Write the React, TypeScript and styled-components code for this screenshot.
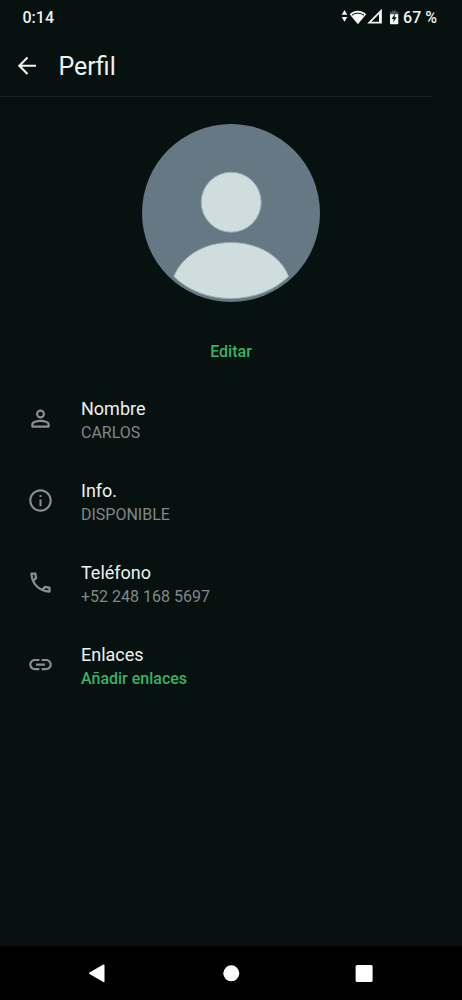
import React from 'react';
import styled, { createGlobalStyle } from 'styled-components';

const GlobalStyle = createGlobalStyle`
  * { box-sizing: border-box; }
  body { margin: 0; background: #07110f; }
`;

const Screen = styled.div`
  display: flex;
  flex-direction: column;
  width: 462px;
  height: 1000px;
  background: #07110f;
  color: #eef2f1;
  font-family: Roboto, 'Liberation Sans', sans-serif;
  overflow: hidden;
`;

const StatusBar = styled.div`
  display: flex;
  align-items: center;
  justify-content: space-between;
  height: 35px;
  padding: 0 25px 0 22.5px;
  font-size: 16px;
  font-weight: 500;
  line-height: 20px;
  white-space: nowrap;
`;

const StatusGroup = styled.div`
  display: flex;
  align-items: center;
`;

const StatusIcons = styled.svg`
  display: block;
  margin-right: 3px;
`;

const Header = styled.header`
  display: flex;
  align-items: center;
  width: 433px;
  height: 62px;
  padding-left: 13px;
  border-bottom: 1px solid #182220;
`;

const BackButton = styled.button`
  display: flex;
  padding: 0;
  border: 0;
  background: none;
  color: #f4f7f6;
`;

const Title = styled.h1`
  margin: 0 0 0 17.5px;
  padding-top: 2px;
  font-size: 25px;
  font-weight: 400;
  line-height: 30px;
`;

const AvatarArea = styled.div`
  display: flex;
  flex-direction: column;
  align-items: center;
  padding-top: 27px;
  height: 281px;
`;

const EditLink = styled.a`
  margin-top: 39px;
  padding-top: 1px;
  color: #37b266;
  font-size: 16px;
  font-weight: 500;
  line-height: 20px;
`;

const Rows = styled.main`
  flex: 1;
`;

const Row = styled.div`
  display: flex;
  align-items: center;
  height: 82px;
  padding-left: 27px;
`;

const RowIcon = styled.svg`
  flex: none;
  width: 27px;
  height: 27px;
  margin: 0 27px 1px 0;
  fill: #87908e;
`;

const RowText = styled.div`
  display: flex;
  flex-direction: column;
  padding-top: 2px;
`;

const Label = styled.span`
  font-size: 18px;
  line-height: 23px;
`;

const Value = styled.span<{ $action?: boolean }>`
  padding-top: 1px;
  color: ${(p) => (p.$action ? '#37b266' : '#7f8987')};
  font-size: 16px;
  font-weight: ${(p) => (p.$action ? 500 : 400)};
  line-height: 23px;
`;

const NavBar = styled.nav`
  display: flex;
  align-items: center;
  justify-content: space-between;
  height: 54px;
  padding: 0 86px 0 85px;
  background: #000;
`;

const NavIcon = styled.svg`
  width: 24px;
  height: 24px;
  fill: #fff;
`;

const rows = [
  {
    label: 'Nombre',
    value: 'CARLOS',
    icon: 'M12 5.9a2.1 2.1 0 1 1 0 4.2 2.1 2.1 0 0 1 0-4.2M12 4C9.79 4 8 5.79 8 8s1.79 4 4 4 4-1.79 4-4-1.79-4-4-4M12 15.1c2.97 0 6.2 1 6.2 2v1.1H5.8v-1.1c0-1 3.23-2 6.2-2M12 13.2c-2.67 0-8.2 1.14-8.2 3.8v2.2c0 .6.4 1 1 1h14.4c.6 0 1-.4 1-1V17c0-2.66-5.53-3.8-8.2-3.8',
  },
  {
    label: 'Info.',
    value: 'DISPONIBLE',
    icon: 'M11.1 7h1.8v1.8h-1.8zm0 4h1.8v6h-1.8zM12 2C6.48 2 2 6.48 2 12s4.48 10 10 10 10-4.48 10-10S17.52 2 12 2m0 18.1c-4.47 0-8.1-3.63-8.1-8.1S7.53 3.9 12 3.9s8.1 3.63 8.1 8.1-3.63 8.1-8.1 8.1',
  },
  {
    label: 'Teléfono',
    value: '+52 248 168 5697',
    icon: 'M6.54 5c.06.89.21 1.76.45 2.59l-1.2 1.2c-.41-1.2-.67-2.47-.76-3.79zm9.86 12.02c.85.24 1.72.39 2.6.45v1.49c-1.32-.09-2.59-.35-3.8-.75zM7.5 3H4c-.55 0-1 .45-1 1 0 9.39 7.61 17 17 17 .55 0 1-.45 1-1v-3.49c0-.55-.45-1-1-1-1.24 0-2.45-.2-3.57-.57-.36-.12-.75-.03-1.02.24l-2.2 2.2c-2.83-1.45-5.15-3.76-6.59-6.59l2.2-2.2c.28-.28.36-.67.25-1.02C8.7 6.45 8.5 5.25 8.5 4c0-.55-.45-1-1-1',
  },
  {
    label: 'Enlaces',
    value: 'Añadir enlaces',
    action: true,
    icon: 'M3.9 12c0-1.71 1.39-3.1 3.1-3.1h4V7H7c-2.76 0-5 2.24-5 5s2.24 5 5 5h4v-1.9H7c-1.71 0-3.1-1.39-3.1-3.1M8 13h8v-2H8zm9-6h-4v1.9h4c1.71 0 3.1 1.39 3.1 3.1s-1.39 3.1-3.1 3.1h-4V17h4c2.76 0 5-2.24 5-5s-2.24-5-5-5',
  },
];

export default function App() {
  return (
    <>
      <GlobalStyle />
      <Screen>
        <StatusBar>
          <span>0:14</span>
          <StatusGroup>
            <StatusIcons width="59" height="20" viewBox="0 0 59 20" fill="#f4f7f6">
              <path d="M3.5 2 6.3 6.8H.7zM3.5 13.8.7 9h5.6z" />
              <path d="M16.9 16.3 8.6 6.3C12.8 1.4 21 1.4 25.2 6.3z" />
              <path d="M10.8 7.2Q16.9 3 23 7.2" fill="none" stroke="#07110f" strokeWidth="1" />
              <path d="M28.3 14.7 40 2.8v11.9z" fill="none" stroke="#f4f7f6" strokeWidth="1.7" />
              <path d="M38 4.8 40 2.8v11.9h-2z" />
              <path d="M51 2.6h4v1.2h2.3V7H49V3.8h2z" fill="#4c5553" />
              <path d="M49 6.2h8.3v9.2q0 .8-.8.8h-6.7q-.8 0-.8-.8z" />
              <path d="m54.2 5.4-3.6 5.5h2.2L52.1 14.6l3.6-5.4h-2.2z" fill="#07110f" />
            </StatusIcons>
            <span>67 %</span>
          </StatusGroup>
        </StatusBar>
        <Header>
          <BackButton aria-label="Atrás">
            <svg width="28" height="28" viewBox="0 0 28 28" fill="none" stroke="currentColor" strokeWidth="2.1">
              <path d="M23 13.7H7M14.5 5.5 6.3 13.7l8.2 8.2" />
            </svg>
          </BackButton>
          <Title>Perfil</Title>
        </Header>
        <AvatarArea>
          <svg width="178" height="178" viewBox="0 0 178 178">
            <circle cx="89" cy="89" r="89" fill="#657883" />
            <g fill="#cfdddf" stroke="#9aabb5" strokeWidth="1">
              <circle cx="89.2" cy="78.2" r="30" />
              <path d="M31.8 152.5C40 132 62 118.5 89 118.5s50 13.5 57.6 34C132 166.5 112 174.5 89 174.5S46 166.5 31.8 152.5z" />
            </g>
          </svg>
          <EditLink>Editar</EditLink>
        </AvatarArea>
        <Rows>
          {rows.map((row) => (
            <Row key={row.label}>
              <RowIcon viewBox="0 0 24 24" fillRule="evenodd">
                <path d={row.icon} />
              </RowIcon>
              <RowText>
                <Label>{row.label}</Label>
                <Value $action={row.action}>{row.value}</Value>
              </RowText>
            </Row>
          ))}
        </Rows>
        <NavBar>
          <NavIcon viewBox="0 0 24 24">
            <path d="M4.5 11.4 18.3 3.6q1.2-.6 1.2.7v16q0 1.3-1.2.7L4.5 13.1q-1.2-.8 0-1.7z" />
          </NavIcon>
          <NavIcon viewBox="0 0 24 24">
            <circle cx="12.3" cy="12.3" r="8" />
          </NavIcon>
          <NavIcon viewBox="0 0 24 24">
            <rect x="3.6" y="3.9" width="17" height="17" rx="1.5" />
          </NavIcon>
        </NavBar>
      </Screen>
    </>
  );
}
